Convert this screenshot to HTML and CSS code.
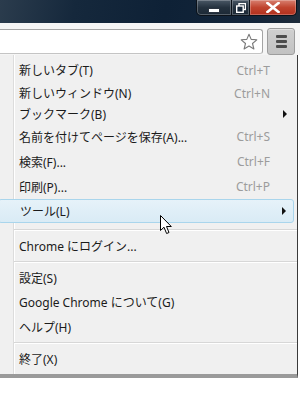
FILE: index.html
```html
<!DOCTYPE html>
<html lang="ja">
<head>
    <meta charset="UTF-8">
    <title>Chrome メニュー</title>
    <link rel="stylesheet" href="styles.css">
</head>
<body>
    <div class="titlebar">
        <div class="win-controls">
            <div class="win-btn minimize"><span class="min-bar"></span></div>
            <div class="win-btn restore">
                <svg width="10" height="10" viewBox="0 0 10 10">
                    <rect x="3" y="0.5" width="6.5" height="6" fill="none" stroke="#fff" stroke-width="1.4"/>
                    <rect x="0.7" y="3" width="6.5" height="6.3" fill="#1b2b3d" stroke="#fff" stroke-width="1.4"/>
                </svg>
            </div>
            <div class="win-btn close">
                <svg width="14" height="11" viewBox="0 0 14 11">
                    <path d="M1.5 1 L12.5 10 M12.5 1 L1.5 10" stroke="#fff" stroke-width="2.6" stroke-linecap="square"/>
                </svg>
            </div>
        </div>
    </div>

    <div class="toolbar">
        <div class="omnibox">
            <svg class="star" width="18" height="18" viewBox="0 0 18 18">
                <path d="M9 1.2 L11.2 6.4 L16.8 6.8 L12.5 10.5 L13.9 16 L9 13 L4.1 16 L5.5 10.5 L1.2 6.8 L6.8 6.4 Z" fill="#fff" stroke="#7a7a7a" stroke-width="1.1" stroke-linejoin="round"/>
            </svg>
        </div>
        <div class="menu-btn">
            <span class="bar"></span>
            <span class="bar"></span>
            <span class="bar"></span>
        </div>
    </div>

    <div class="menu">
        <div class="item"><span class="label">新しいタブ(T)</span><span class="key">Ctrl+T</span><span class="sub"></span></div>
        <div class="item mid"><span class="label">新しいウィンドウ(N)</span><span class="key">Ctrl+N</span><span class="sub"></span></div>
        <div class="item tight"><span class="label">ブックマーク(B)</span><span class="key"></span><span class="sub"><i class="arrow"></i></span></div>
        <div class="item roomy"><span class="label">名前を付けてページを保存(A)...</span><span class="key">Ctrl+S</span><span class="sub"></span></div>
        <div class="item roomy"><span class="label">検索(F)...</span><span class="key">Ctrl+F</span><span class="sub"></span></div>
        <div class="item roomy"><span class="label">印刷(P)...</span><span class="key">Ctrl+P</span><span class="sub"></span></div>
        <div class="item active"><span class="label">ツール(L)</span><span class="key"></span><span class="sub"><i class="arrow"></i></span></div>
        <div class="sep wide"></div>
        <div class="item"><span class="label">Chrome にログイン...</span><span class="key"></span><span class="sub"></span></div>
        <div class="sep"></div>
        <div class="item"><span class="label">設定(S)</span><span class="key"></span><span class="sub"></span></div>
        <div class="item"><span class="label">Google Chrome について(G)</span><span class="key"></span><span class="sub"></span></div>
        <div class="item roomy"><span class="label">ヘルプ(H)</span><span class="key"></span><span class="sub"></span></div>
        <div class="sep"></div>
        <div class="item"><span class="label">終了(X)</span><span class="key"></span><span class="sub"></span></div>

        <!-- mouse pointer hovering the tools entry -->
        <svg class="cursor" width="13" height="20" viewBox="0 0 13 20">
            <path d="M0.5 0.5 L0.5 15.5 L4 12.2 L6.6 18.5 L9 17.5 L6.5 11.5 L11.3 11.5 Z" fill="#fff" stroke="#000" stroke-width="1" stroke-linejoin="miter"/>
        </svg>
    </div>
</body>
</html>
```

FILE: styles.css
```css
body {
    margin: 0;
    width: 300px;
    height: 400px;
    overflow: hidden;
    background: #fff;
    font-family: "Noto Sans", "Noto Sans CJK JP", sans-serif;
    font-size: 12px;
    color: #1b1b1b;
}

/* window title bar */
.titlebar {
    height: 23px;
    background: linear-gradient(100deg, #2b3c4d 0%, #15283c 25%, #0e2136 55%, #13253a 85%, #1e2c3a 100%);
    display: flex;
    justify-content: flex-end;
    padding-right: 3px;
}
.win-controls {
    display: flex;
    height: 16px;
}
.win-btn {
    display: flex;
    align-items: center;
    justify-content: center;
    box-sizing: border-box;
    border: 1px solid #0b121a;
    border-top: none;
    box-shadow: inset 0 0 0 1px rgba(255, 255, 255, 0.25);
    background: linear-gradient(#4a5866, #25323f 50%, #1b2835);
}
.minimize {
    width: 36px;
    border-radius: 0 0 0 5px;
}
.min-bar {
    width: 10px;
    height: 3px;
    margin-top: 5px;
    background: #fff;
    border: 1px solid #2b3440;
}
.restore {
    width: 18px;
    border-left: none;
}
.close {
    width: 47px;
    border-left: none;
    border-radius: 0 0 5px 0;
    background: linear-gradient(#d88070, #c0442f 50%, #b2301d);
}

/* toolbar with omnibox */
.toolbar {
    height: 32px;
    box-sizing: border-box;
    padding-top: 6px;
    background: #f5f5f5;
    display: flex;
    align-items: flex-start;
}
.omnibox {
    flex: 1;
    height: 25px;
    box-sizing: border-box;
    margin-left: -4px;
    border: 1px solid #a4a4a4;
    border-bottom-color: #c4c4c4;
    border-radius: 3px;
    background: #fff;
    display: flex;
    align-items: center;
    justify-content: flex-end;
    padding-right: 4px;
}
.menu-btn {
    width: 28px;
    height: 27px;
    margin: -1px 5px 0 4px;
    box-sizing: border-box;
    border: 1px solid #9d9d9d;
    border-radius: 3px;
    background: linear-gradient(#cfcfcf, #c2c2c2);
    box-shadow: inset 0 1px 0 #e2e2e2;
    display: flex;
    flex-direction: column;
    align-items: center;
    justify-content: center;
    gap: 2px;
}
.bar {
    width: 11px;
    height: 3px;
    border-radius: 1px;
    background: #4c4c4c;
}

/* drop-down menu */
.menu {
    position: relative;
    width: 298px;
    box-sizing: border-box;
    padding: 3px 0 3px;
    border-right: 1px solid #3a3a3a;
    border-bottom: 4px solid #9a9a9a;
    background: linear-gradient(to right, #f0f0f0 13px, #dcdcdc 13px, #dcdcdc 14px, #fff 14px, #fff 15px, #f0f0f0 15px);
}
.item {
    height: 24px;
    display: flex;
    align-items: center;
    padding: 0 10px 0 19px;
    white-space: nowrap;
}
.item.mid {
    height: 22px;
}
.item.tight {
    height: 20px;
}
.item.roomy {
    height: 25px;
}
.item.active {
    box-sizing: border-box;
    margin: 0 3px 0 -2px;
    padding: 0 7px 0 21px;
    border: 1px solid #a9d5ec;
    border-radius: 3px;
    background: linear-gradient(#e6f2f9, #d9ebf5);
}
.label {
    flex: 1;
}
.key {
    color: #9c9c9c;
}
.sub {
    width: 17px;
    display: flex;
    justify-content: flex-end;
}
.arrow {
    width: 0;
    height: 0;
    border-top: 4px solid transparent;
    border-bottom: 4px solid transparent;
    border-left: 4px solid #111;
}
.sep {
    height: 1px;
    margin: 3px 0 3px 14px;
    background: #d7d7d7;
    border-bottom: 1px solid #fff;
}
.sep.wide {
    margin-top: 6px;
}
.cursor {
    position: absolute;
    left: 160px;
    top: 160px;
}
```
